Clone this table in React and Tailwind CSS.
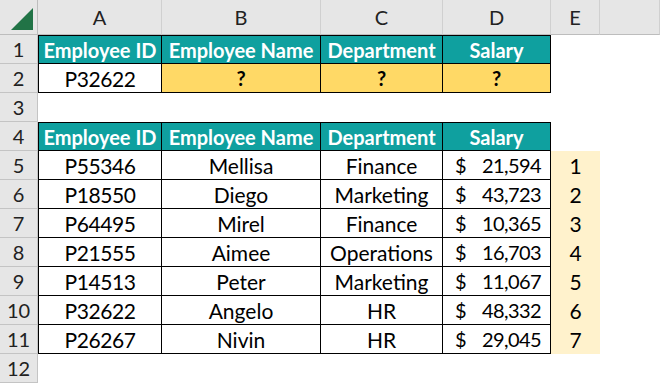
import React from 'react';

const cols = ['A', 'B', 'C', 'D', 'E', ''];

const rows = [
  ['P55346', 'Mellisa', 'Finance', '21,594', 1],
  ['P18550', 'Diego', 'Marketing', '43,723', 2],
  ['P64495', 'Mirel', 'Finance', '10,365', 3],
  ['P21555', 'Aimee', 'Operations', '16,703', 4],
  ['P14513', 'Peter', 'Marketing', '11,067', 5],
  ['P32622', 'Angelo', 'HR', '48,332', 6],
  ['P26267', 'Nivin', 'HR', '29,045', 7],
];

const heads = ['Employee ID', 'Employee Name', 'Department', 'Salary'];

const RowHead = ({ n }) => (
  <div className="bg-[#e6e6e6] border-b border-r border-[#c4c4c4] flex items-center justify-center text-[20px] text-[#222]">
    {n}
  </div>
);

const Blank = () => <div className="bg-white" />;

const HeadRow = ({ n }) => (
  <>
    <RowHead n={n} />
    {heads.map((h, i) => (
      <div
        key={h}
        className={`bg-[#0fa09f] text-white font-bold text-[20px] flex items-center justify-center border-y border-r border-black ${i === 0 ? 'border-l' : ''}`}
      >
        {h}
      </div>
    ))}
    <Blank />
    <Blank />
  </>
);

export default function App() {
  return (
    <div
      className="w-[660px] h-[383px] overflow-hidden bg-white grid grid-cols-[38px_124px_159px_122px_108px_49px_60px] grid-rows-[35px_repeat(12,29px)] text-[21px] text-black leading-none"
      style={{ fontFamily: 'Lato, "Open Sans", sans-serif' }}
    >
      {/* column headers */}
      <div className="bg-[#e6e6e6] border-b border-r border-[#bdbdbd] flex items-end justify-end p-[4px]">
        <svg width="22" height="22" viewBox="0 0 22 22">
          <polygon points="22,0 22,22 0,22" fill="#217346" />
        </svg>
      </div>
      {cols.map((c, i) => (
        <div
          key={i}
          className="bg-[#e6e6e6] border-b border-[#bdbdbd] border-r-[#d0d0d0] border-r flex items-center justify-center text-[20px] text-[#222]"
        >
          {c}
        </div>
      ))}

      {/* row 1 */}
      <HeadRow n={1} />

      {/* row 2 */}
      <RowHead n={2} />
      <div className="border-x border-b border-black flex items-center justify-center tracking-[-0.4px]">P32622</div>
      {[0, 1, 2].map((i) => (
        <div key={i} className="bg-[#ffd966] border-r border-b border-black flex items-center justify-center font-bold text-[20px]">
          ?
        </div>
      ))}
      <Blank />
      <Blank />

      {/* row 3 */}
      <RowHead n={3} />
      {cols.map((c, i) => <Blank key={i} />)}

      {/* row 4 */}
      <HeadRow n={4} />

      {rows.map((r, idx) => (
        <React.Fragment key={r[0]}>
          <RowHead n={idx + 5} />
          <div className="border-x border-b border-black flex items-center justify-center tracking-[-0.4px]">{r[0]}</div>
          <div className="border-r border-b border-black flex items-center justify-center">{r[1]}</div>
          <div className="border-r border-b border-black flex items-center justify-center">{r[2]}</div>
          <div className="border-r border-b border-black flex items-center justify-between pl-[12px] pr-[9px] text-[20px]">
            <span>$</span>
            <span className="tracking-[-0.6px]">{r[3]}</span>
          </div>
          <div className="bg-[#fff2cc] flex items-center justify-center">{r[4]}</div>
          <Blank />
        </React.Fragment>
      ))}

      {/* row 12 */}
      <RowHead n={12} />
      {cols.map((c, i) => <Blank key={i} />)}
    </div>
  );
}
